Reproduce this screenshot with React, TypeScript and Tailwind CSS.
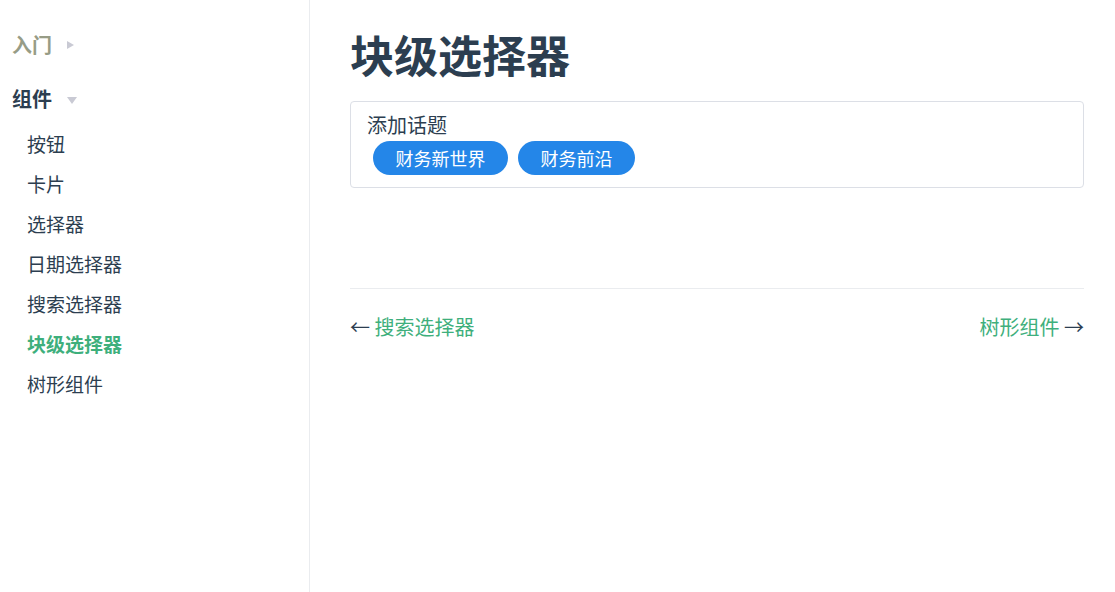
import React from 'react';

const items = ['按钮', '卡片', '选择器', '日期选择器', '搜索选择器', '块级选择器', '树形组件'];
const active = '块级选择器';
const topics = ['财务新世界', '财务前沿'];

export default function App() {
  return (
    <div
      className="flex h-[592px] w-[1115px] bg-white text-[#2c3e50]"
      style={{ fontFamily: '"Noto Sans CJK SC", "Noto Sans", sans-serif' }}
    >
      <aside className="w-[310px] shrink-0 border-r border-[#eaecef] pt-[25px]">
        <div className="flex h-[40px] items-center pl-[12px] text-[20px] font-bold text-[#979c86]">
          入门
          <span className="ml-[15px] inline-block h-0 w-0 border-y-[4px] border-l-[7px] border-y-transparent border-l-[#c9cad4]" />
        </div>
        <div className="mt-[14px] flex h-[40px] items-center pl-[12px] text-[20px] font-bold">
          组件
          <span className="ml-[15px] mt-[2px] inline-block h-0 w-0 border-x-[5px] border-t-[7px] border-x-transparent border-t-[#c9cad4]" />
        </div>
        <ul className="mt-[5px]">
          {items.map((it) => (
            <li
              key={it}
              className={`flex h-[40px] items-center pl-[27px] text-[19px] ${
                it === active ? 'font-bold text-[#3eaf7c]' : ''
              }`}
            >
              {it}
            </li>
          ))}
        </ul>
      </aside>

      <main className="flex-1 pl-[40px] pr-[31px] pt-[27px]">
        <h1 className="text-[44px] font-bold leading-[55px]">块级选择器</h1>

        <div className="mt-[19px] rounded-[4px] border border-[#dcdfe6] px-[16px] pb-[12px] pt-[10px]">
          <div className="text-[20px] leading-[26px]">添加话题</div>
          <div className="mt-[3px] flex gap-[10px] pl-[6px]">
            {topics.map((t) => (
              <span
                key={t}
                className="flex h-[34px] items-center rounded-full bg-[#2486e8] px-[22.5px] text-[18px] text-white"
              >
                {t}
              </span>
            ))}
          </div>
        </div>

        <div className="mt-[100px] border-t border-[#eaecef] pt-[25px]">
          <div className="flex justify-between text-[20px] leading-[26px]">
            <span>
              ← <span className="text-[#3eaf7c]">搜索选择器</span>
            </span>
            <span>
              <span className="text-[#3eaf7c]">树形组件</span> →
            </span>
          </div>
        </div>
      </main>
    </div>
  );
}
